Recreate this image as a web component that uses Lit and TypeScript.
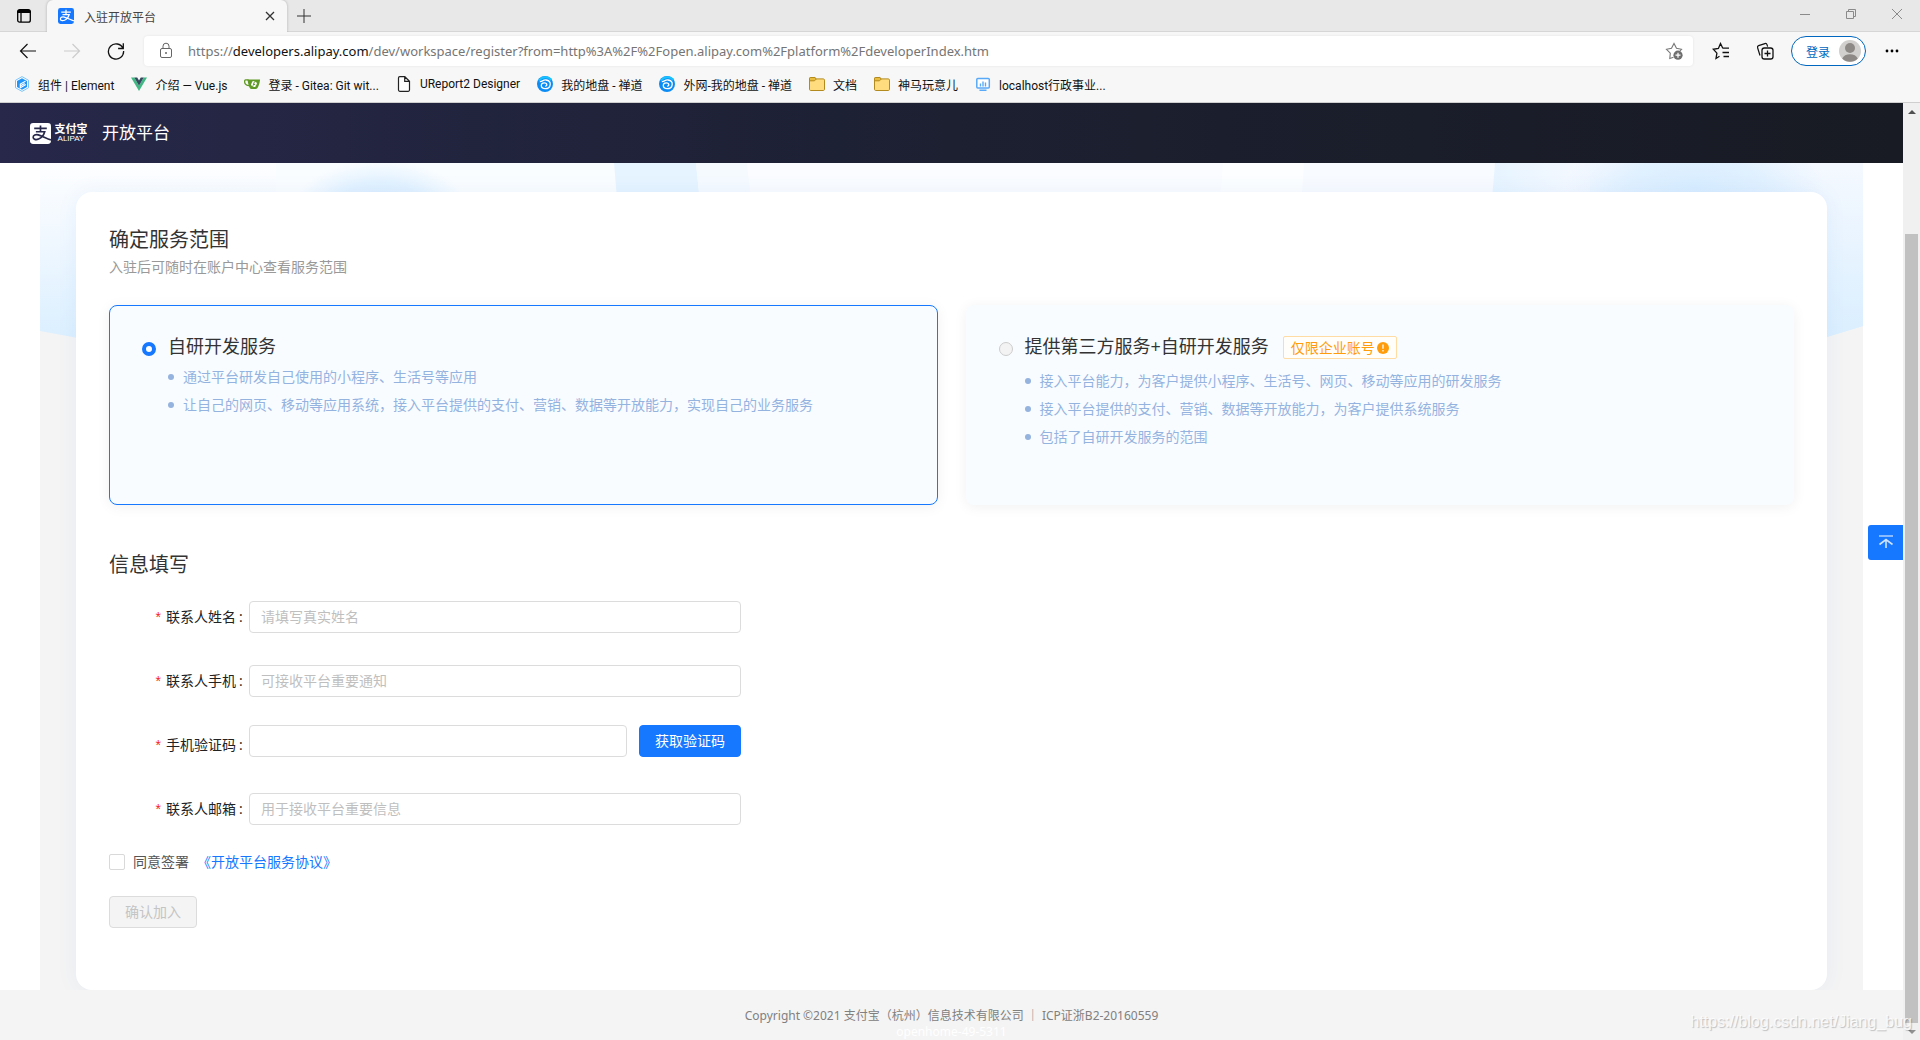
import { LitElement, html, svg, css, nothing } from "lit";
import { customElement, state } from "lit/decorators.js";

const zhiMark = svg`
  <path d="M4 5.200h12M10 2.300v6M5.600 8.300h8.400c-.9 3.200-3.200 5.900-5.800 7-2.700 1.100-5.200.3-5.200-1.700s2.300-3 4.900-2.300c3.600 1 7 3 12.100 4.900" fill="none" stroke-width="1.600"/>`;

const elementIcon = html`<svg width="16" height="16" viewBox="0 0 16 16" aria-hidden="true">
  <path d="M8 .6l6.500 3.700v7.400L8 15.400l-6.500-3.700V4.300z" fill="#fff" stroke="#6bbcff" stroke-width=".9"/>
  <path d="M8 2.300l5 2.800v5.800L8 13.700l-5-2.800V5.100z" fill="#2196f8"/>
  <path d="M11.500 5.300L6.300 8.100v3.600l5.600-3.100M6.500 9.700l4.200-2.300" stroke="#fff" stroke-width="1.100" fill="none"/>
</svg>`;
const vueIcon = html`<svg width="16" height="16" viewBox="0 0 16 16" aria-hidden="true">
  <path d="M0 1.500h3.300L8 9.700l4.700-8.200H16L8 15z" fill="#41b883"/>
  <path d="M3.300 1.500h2.900L8 4.600l1.800-3.100h2.900L8 9.700z" fill="#35495e"/>
</svg>`;
const giteaIcon = html`<svg width="16" height="16" viewBox="0 0 16 16" aria-hidden="true">
  <path d="M4.500 4C2 3.600.6 3.700.6 5.400c0 2.200 1.600 4 4.600 4.200" fill="none" stroke="#609926" stroke-width="1.300"/>
  <path d="M3.600 3.400l12 .1c.5 0 .5.5.3 1.200-.4 2.600-1 5-2.600 7.500-.4.600-1 .8-1.700.8H7.400c-.7 0-1.300-.4-1.600-1C4.600 9.500 3.800 6.500 3.600 3.400z" fill="#609926"/>
  <rect x="7.500" y="5.600" width="5" height="5" rx="1.200" transform="rotate(25 10 8)" fill="#fff"/>
  <path d="M10.400 5.800L9 9.800M9.800 7.800l1.400 1.300" stroke="#609926" fill="none"/>
</svg>`;
const fileIcon = html`<svg width="16" height="16" viewBox="0 0 16 16" aria-hidden="true">
  <path d="M2.500 2c0-.7.500-1.300 1.300-1.300h5l4.700 4.600v8.800c0 .7-.5 1.200-1.200 1.200H3.800c-.8 0-1.300-.5-1.300-1.200zM8.700.8v4.500h4.700" fill="#fff" stroke="#222" stroke-width="1.200"/>
</svg>`;
const zentaoIcon = html`<svg width="16" height="16" viewBox="0 0 16 16" aria-hidden="true">
  <circle cx="8" cy="8" r="8" fill="#0b8cf5"/>
  <path d="M2 4.500A8 8 0 0 1 14.500 4" fill="none" stroke="#18c3ff" stroke-width="2"/>
  <path d="M2.800 5.600C5 6 6 3.600 9 4c2.600.3 4.500 2 4.200 4.600-.3 2.600-2.400 4.100-5 4.100-2.200 0-3.900-1.300-3.900-3.100 0-1.600 1.200-2.800 2.900-2.800 1.500 0 2.600.9 2.600 2 0 .9-.7 1.500-1.700 1.400" fill="none" stroke="#fff" stroke-width="1.300"/>
</svg>`;
const folderIcon = html`<svg width="16" height="16" viewBox="0 0 16 16" aria-hidden="true">
  <path d="M.5 2.600c0-.7.5-1.100 1.100-1.100h4.200l1.500 1.400h7c.7 0 1.200.5 1.200 1.200v9.200c0 .7-.5 1.200-1.200 1.200H1.700c-.7 0-1.200-.5-1.200-1.200z" fill="#ffdc7d" stroke="#b38a1d"/>
  <path d="M.5 4.800h5L7.300 3 5.800 1.500H1.600C1 1.500.5 2 .5 2.600z" fill="#e8bd3f" stroke="#b38a1d"/>
</svg>`;
const monitorIcon = html`<svg width="16" height="16" viewBox="0 0 16 16" aria-hidden="true">
  <rect x="1.800" y="2.500" width="12.500" height="9.500" rx="1" fill="#fff" stroke="#58a9f7" stroke-width="1.500"/>
  <path d="M5.500 7.500v3M8 5.500v5M10.500 6.500v4M4.500 14.200h7" stroke="#58a9f7" stroke-width="1.400" fill="none"/>
</svg>`;

const bookmarks = [
  { icon: elementIcon, text: "组件 | Element" },
  { icon: vueIcon, text: "介绍 — Vue.js" },
  { icon: giteaIcon, text: "登录 - Gitea: Git wit..." },
  { icon: fileIcon, text: "UReport2 Designer" },
  { icon: zentaoIcon, text: "我的地盘 - 禅道" },
  { icon: zentaoIcon, text: "外网-我的地盘 - 禅道" },
  { icon: folderIcon, text: "文档" },
  { icon: folderIcon, text: "神马玩意儿" },
  { icon: monitorIcon, text: "localhost行政事业..." },
];

@customElement("browser-chrome")
export class BrowserChrome extends LitElement {
  static styles = css`
    :host { display: block; background: #f7f7f7; border-bottom: 1px solid #cfcfcf; font-family: Roboto, "Noto Sans CJK SC", sans-serif; font-size: 12px; color: #111; }
    button { border: 0; padding: 0; background: none; font: inherit; color: inherit; display: grid; place-items: center; }
    svg { display: block; flex: none; }
    .tabs { display: flex; align-items: stretch; height: 32px; background: #e8e8e8; box-shadow: inset 0 -1px #d6d6d6; }
    .panes { width: 47px; }
    .tab { display: flex; align-items: center; width: 240px; box-sizing: border-box; padding: 0 11px; gap: 10px; background: #f7f7f7; border-radius: 6px 6px 0 0; box-shadow: 0 0 3px rgba(0, 0, 0, 0.25); clip-path: inset(0 -4px 0 -4px); }
    .tab-title { flex: 1; color: #444; }
    .add { width: 34px; }
    .window { display: flex; margin-left: auto; color: #8a8a8a; }
    .window button { width: 46px; height: 28px; }
    .bar { display: flex; align-items: center; height: 38px; }
    .nav { display: flex; width: 144px; box-sizing: border-box; padding: 0 6px; }
    .nav button { width: 44px; }
    .address { flex: 1; display: flex; align-items: center; height: 30px; box-sizing: border-box; background: #fff; border-radius: 4px; padding: 0 10px 0 14px; gap: 14px; box-shadow: 0 0 3px rgba(0, 0, 0, 0.08); }
    .url { flex: 1; font-family: "Noto Sans", sans-serif; font-size: 13px; color: #757575; white-space: nowrap; }
    .url b { font-weight: 400; color: #111; }
    .tools { display: flex; align-items: center; }
    .tools .tool { width: 32px; }
    .tools .tool:first-child { width: 56px; }
    .login { display: flex; align-items: center; width: 75px; height: 30px; box-sizing: border-box; justify-content: space-between; border: 1px solid #0067c0; border-radius: 15px; background: #fff; padding: 0 3px 0 14px; color: #0067c0; margin: 0 8px 0 10px; }
    .tools .more { width: 36px; margin-right: 10px; }
    .marks { display: flex; align-items: center; height: 28px; padding: 0 14px 4px; gap: 17px; list-style: none; margin: 0; }
    .marks a { display: flex; align-items: center; gap: 8px; color: inherit; text-decoration: none; white-space: nowrap; }
  `;

  render() {
    return html`
      <div class="tabs">
        <button class="panes" aria-label="标签页操作">
          <svg width="16" height="16" viewBox="0 0 16 16"><path d="M1.700 4h12.600v8.200c0 1.200-.8 2-2 2H3.700c-1.200 0-2-.8-2-2zM5 4v10" fill="none" stroke="#000" stroke-width="1.300"/><path d="M1 5V3.700C1 2 2.200 1 3.700 1h8.600C13.800 1 15 2 15 3.700V5z"/></svg>
        </button>
        <div class="tab">
          <svg width="16" height="16" viewBox="0 0 20 20" aria-hidden="true"><rect width="20" height="20" rx="3" fill="#1677ff"/><g stroke="#fff">${zhiMark}</g></svg>
          <span class="tab-title">入驻开放平台</span>
          <button aria-label="关闭标签页"><svg width="12" height="12" viewBox="0 0 12 12"><path d="M2 2l8 8M10 2l-8 8" stroke="#333" stroke-width="1.300"/></svg></button>
        </div>
        <button class="add" aria-label="新建标签页"><svg width="16" height="16" viewBox="0 0 16 16"><path d="M1 8h14M8 1v14" stroke="#333"/></svg></button>
        <div class="window">
          <button aria-label="最小化"><svg width="12" height="12" viewBox="0 0 12 12"><path d="M1 6.500h10" stroke="currentColor"/></svg></button>
          <button aria-label="还原"><svg width="12" height="12" viewBox="0 0 12 12"><path d="M1.500 3.500h7v7h-7zM3.500 3.500v-2h7v7h-2" fill="none" stroke="currentColor"/></svg></button>
          <button aria-label="关闭"><svg width="12" height="12" viewBox="0 0 12 12"><path d="M1 1l10 10M11 1L1 11" stroke="currentColor"/></svg></button>
        </div>
      </div>
      <div class="bar">
        <div class="nav">
          <button aria-label="后退"><svg width="18" height="18" viewBox="0 0 18 18"><path d="M17 9H1.500M8.500 2l-7 7 7 7" fill="none" stroke="#111" stroke-width="1.200"/></svg></button>
          <button aria-label="前进" disabled><svg width="18" height="18" viewBox="0 0 18 18"><path d="M1 9h15.500M9.500 2l7 7-7 7" fill="none" stroke="#ccc" stroke-width="1.200"/></svg></button>
          <button aria-label="刷新"><svg width="18" height="18" viewBox="0 0 18 18"><path d="M16 6.500A7.600 7.600 0 1 0 16.600 9M16.300 1.300v5.200h-5.200" fill="none" stroke="#111" stroke-width="1.300"/></svg></button>
        </div>
        <div class="address">
          <svg width="16" height="18" viewBox="0 0 16 18" aria-hidden="true"><rect x="2.500" y="6.500" width="11" height="9" rx="1.500" fill="none" stroke="#666"/><path d="M5 6.500V4.200a3 3 0 0 1 6 0v2.300" fill="none" stroke="#666"/><circle cx="8" cy="11" r="1" fill="#666"/></svg>
          <span class="url">https://<b>developers.alipay.com</b>/dev/workspace/register?from=http%3A%2F%2Fopen.alipay.com%2Fplatform%2FdeveloperIndex.htm</span>
          <button aria-label="添加到收藏夹"><svg width="18" height="18" viewBox="0 0 18 18"><path d="M8.500 15.200l-3.700 1.300.5-5.300L1.500 7.300l5-1L9 1.500l2.500 4.800 5 1-1.500 1.500" fill="none" stroke="#777" stroke-width="1.100"/><circle cx="13" cy="13.200" r="4.600" fill="#6e6e6e"/><path d="M10.500 13.200h5M13 10.700v5" stroke="#fff" stroke-width="1.200"/></svg></button>
        </div>
        <div class="tools">
          <button class="tool" aria-label="收藏夹"><svg width="18" height="18" viewBox="0 0 18 18"><path d="M7.500 14.300L4 16.500l.9-5.400L1.300 7.300l5.100-.8L8.500 1.500l2.300 4.700M10.800 6.200h6.200M10.500 10.500H17M11.500 14.500H17" fill="none" stroke="#111" stroke-width="1.300"/></svg></button>
          <button class="tool" aria-label="集锦"><svg width="18" height="18" viewBox="0 0 18 18"><path d="M4 13.500L1.600 5.700c-.3-1 .1-1.800 1-2.100l6.300-2c1-.3 1.800.1 2.100 1l.6 2" fill="none" stroke="#111" stroke-width="1.200"/><rect x="6" y="6" width="11" height="11" rx="2.300" fill="none" stroke="#111" stroke-width="1.300"/><path d="M8.500 11.500h6M11.500 8.500v6" stroke="#111" stroke-width="1.300"/></svg></button>
          <button class="login">登录<svg width="24" height="24" viewBox="0 0 24 24" aria-hidden="true"><circle cx="12" cy="12" r="11" fill="#d2d0ce"/><circle cx="12" cy="9" r="5" fill="#8d8986"/><path d="M4.200 19.500c1.300-2.800 4.200-4.300 7.800-4.300s6.500 1.500 7.800 4.300a11 11 0 0 1-15.600 0z" fill="#8d8986"/></svg></button>
          <button class="more" aria-label="设置及其他"><svg width="16" height="4" viewBox="0 0 16 4"><circle cx="3" cy="2" r="1.400"/><circle cx="8" cy="2" r="1.400"/><circle cx="13" cy="2" r="1.400"/></svg></button>
        </div>
      </div>
      <ul class="marks">
        ${bookmarks.map((b) => html`<li><a href="#">${b.icon}<span>${b.text}</span></a></li>`)}
      </ul>`;
  }
}

const services = [
  {
    id: "self",
    title: "自研开发服务",
    tag: "",
    points: [
      "通过平台研发自己使用的小程序、生活号等应用",
      "让自己的网页、移动等应用系统，接入平台提供的支付、营销、数据等开放能力，实现自己的业务服务",
    ],
  },
  {
    id: "third",
    title: "提供第三方服务+自研开发服务",
    tag: "仅限企业账号",
    points: [
      "接入平台能力，为客户提供小程序、生活号、网页、移动等应用的研发服务",
      "接入平台提供的支付、营销、数据等开放能力，为客户提供系统服务",
      "包括了自研开发服务的范围",
    ],
  },
];

const fields = [
  { id: "name", label: "联系人姓名", hint: "请填写真实姓名", code: false },
  { id: "mobile", label: "联系人手机", hint: "可接收平台重要通知", code: false },
  { id: "code", label: "手机验证码", hint: "", code: true },
  { id: "mail", label: "联系人邮箱", hint: "用于接收平台重要信息", code: false },
];

@customElement("register-form")
export class RegisterForm extends LitElement {
  @state() private agreed = false;

  static styles = css`
    :host { display: block; font-size: 14px; line-height: 22px; color: #333; }
    h2 { margin: 0; font-size: 20px; line-height: 28px; font-weight: 400; }
    .sub { margin: 2px 0 0; color: #999; }
    .services { display: grid; grid-template-columns: 1fr 1fr; gap: 28px; margin-top: 27px; }
    .service { min-height: 200px; box-sizing: border-box; border: 1px solid transparent; border-radius: 8px; background: #f8fcff; padding: 27px 32px; box-shadow: 0 2px 14px rgba(0, 0, 0, 0.06); }
    .service.on { border-color: #1677ff; }
    .head { display: grid; grid-template-columns: 14px auto auto 1fr; align-items: start; column-gap: 12px; }
    .head.tagged { min-height: 30px; }
    .head label { font-size: 18px; line-height: 26px; }
    .radio { appearance: none; width: 14px; height: 14px; margin: 9px 0 0; border: 1px solid #ccc; border-radius: 50%; background: #f3f3f3; box-sizing: border-box; }
    .radio:checked { border: 4px solid #1677ff; background: #fff; }
    .tag { display: flex; align-items: center; gap: 2px; height: 23px; box-sizing: border-box; margin: 3px 0 0 2px; padding: 0 7px; border: 1px solid #ffdca3; border-radius: 2px; background: #fffefa; color: #ff9c0c; }
    .points { list-style: none; margin: 4px 0 0; padding: 0 0 0 26px; color: #95b3df; line-height: 28px; }
    .points li { display: flex; align-items: center; gap: 9px; }
    .points li::before { content: ""; width: 6px; height: 6px; flex: none; border-radius: 50%; background: #95b3df; }
    .info { margin-top: 46px; }
    .rows { margin-top: 6px; max-width: 632px; }
    .row { display: grid; grid-template-columns: 130px 1fr; column-gap: 10px; align-items: center; height: 64px; }
    .name { display: flex; justify-content: flex-end; color: #222; white-space: nowrap; }
    .name::before { content: "*"; margin-right: 5px; color: #f5222d; font-family: "Liberation Sans", sans-serif; }
    .name::after { content: ":"; width: 0; margin-left: 3px; }
    .control { display: flex; gap: 12px; }
    .control.code { padding-bottom: 8px; }
    .text { flex: 1; min-width: 0; height: 32px; box-sizing: border-box; border: 1px solid #dcdcdc; border-radius: 4px; background: #fff; padding: 0 11px 2px; font: inherit; color: inherit; }
    .text::placeholder { color: #bfbfbf; opacity: 1; }
    .button { height: 32px; border: 1px solid #1677ff; border-radius: 4px; background: #1677ff; color: #fff; padding: 0 15px; font: inherit; }
    .button:disabled { background: #f4f4f4; border-color: #dcdcdc; color: #c4c4c4; }
    .agree { display: flex; align-items: center; gap: 8px; margin: 10px 0 23px; color: #555; }
    .agree input { appearance: none; width: 16px; height: 16px; box-sizing: border-box; margin: 0; border: 1px solid #d9d9d9; border-radius: 2px; background: #fff; }
    .agree input:checked { background: #1677ff; }
    .agree a { color: #1677ff; text-decoration: none; }
  `;

  render() {
    return html`
      <h2>确定服务范围</h2>
      <p class="sub">入驻后可随时在账户中心查看服务范围</p>
      <div class="services">
        ${services.map(
          (s, i) => html`<section class="service ${i === 0 ? "on" : ""}">
            <div class="head ${s.tag ? "tagged" : ""}">
              <input class="radio" type="radio" name="service" id=${s.id} ?checked=${i === 0} ?disabled=${i > 0} />
              <label for=${s.id}>${s.title}</label>
              ${s.tag
                ? html`<span class="tag">${s.tag}<svg width="12" height="12" viewBox="0 0 12 12" aria-hidden="true"><circle cx="6" cy="6" r="6" fill="#ff9c0c"/><path d="M6 2.500v4.300M6 8v1.500" stroke="#fff" stroke-width="1.300"/></svg></span>`
                : nothing}
            </div>
            <ul class="points">${s.points.map((p) => html`<li>${p}</li>`)}</ul>
          </section>`
        )}
      </div>
      <h2 class="info">信息填写</h2>
      <form @submit=${(e: Event) => e.preventDefault()}>
        <div class="rows">
          ${fields.map(
            (f) => html`<div class="row">
              <label class="name" for=${f.id}>${f.label}</label>
              <div class="control ${f.code ? "code" : ""}">
                <input class="text" id=${f.id} type="text" placeholder=${f.hint || nothing} />
                ${f.code ? html`<button class="button" type="button">获取验证码</button>` : nothing}
              </div>
            </div>`
          )}
        </div>
        <div class="agree">
          <input id="agree" type="checkbox" .checked=${this.agreed} @change=${() => (this.agreed = !this.agreed)} />
          <label for="agree">同意签署</label>
          <a href="#">《开放平台服务协议》</a>
        </div>
        <button class="button" type="submit" ?disabled=${!this.agreed}>确认加入</button>
      </form>`;
  }
}

@customElement("app-root")
export class AppRoot extends LitElement {
  static styles = css`
    :host { display: flex; flex-direction: column; min-height: 100vh; position: relative; background: #fff; font-family: "Open Sans", "Noto Sans CJK SC", sans-serif; }
    browser-chrome { height: 102px; }
    .view { flex: 1; display: flex; position: relative; }
    .page { flex: 1; min-width: 0; display: flex; flex-direction: column; position: relative; }
    .top { display: flex; align-items: center; height: 60px; padding: 0 30px; background: linear-gradient(90deg, #27284a, #1c2031 50%, #181b23); color: #fff; }
    .top svg { display: block; }
    .brand { display: flex; flex-direction: column; align-items: center; width: 36px; margin-left: 2px; font-size: 11px; line-height: 12px; font-weight: 700; }
    .latin { font-family: "Liberation Sans", sans-serif; font-size: 8px; line-height: 8px; font-weight: 400; }
    .product { margin-left: 13px; font-size: 17px; line-height: 24px; }
    .main { flex: 1; display: flex; margin: 0 40px; padding: 29px 36px 0; background: #f4f4f4; position: relative; overflow: hidden; }
    .art { position: absolute; inset: 0 0 auto 0; width: 100%; height: 176px; }
    .card { flex: 1; position: relative; background: #fff; border-radius: 16px; padding: 34px 33px 56px; box-shadow: 0 0 20px rgba(60, 130, 220, 0.08); }
    .foot { background: #f4f4f4; height: 50px; box-sizing: border-box; padding-top: 18px; text-align: center; font-family: "Noto Sans", "Noto Sans CJK SC", sans-serif; font-size: 12px; line-height: 16px; color: #808080; }
    .foot p { margin: 0; }
    .build { color: #fff; }
    .up { position: absolute; right: 0; top: 45%; width: 35px; height: 35px; border: 0; padding: 0; border-radius: 3px 0 0 3px; background: #1677ff; display: grid; place-items: center; }
    .scroll { width: 17px; box-sizing: border-box; background: #f0f0f0; display: flex; flex-direction: column; padding: 0 2px; }
    .arrow { height: 17px; display: grid; place-items: center; }
    .space { flex: 10; }
    .thumb { flex: 69; background: #c1c1c1; }
    .mark { position: absolute; right: 8px; bottom: 8px; font-family: "Liberation Sans", sans-serif; font-size: 16px; line-height: 20px; color: rgba(255, 255, 255, 0.8); text-shadow: 1px 1px 1px rgba(0, 0, 0, 0.22); }
  `;

  render() {
    return html`
      <browser-chrome></browser-chrome>
      <div class="view">
        <div class="page">
          <header class="top">
            <svg width="21" height="21" viewBox="0 0 20 20" aria-hidden="true"><rect width="20" height="20" rx="3" fill="#fff"/><g stroke="#27284a">${zhiMark}</g></svg>
            <div class="brand"><span>支付宝</span><span class="latin">ALIPAY</span></div>
            <span class="product">开放平台</span>
          </header>
          <main class="main">
            <svg class="art" viewBox="0 0 1823 176" preserveAspectRatio="none" aria-hidden="true">
              <defs>
                <linearGradient id="base" x1="0" y1="0" x2="0" y2="1"><stop offset="0" stop-color="#fdfeff"/><stop offset=".4" stop-color="#f1f8ff"/><stop offset="1" stop-color="#daefff"/></linearGradient>
                <linearGradient id="edge" x1="0" y1="0" x2="0" y2="1"><stop offset="0" stop-color="#f5f9ff"/><stop offset="1" stop-color="#d9eeff"/></linearGradient>
                <radialGradient id="glow"><stop offset="0" stop-color="#d8edff"/><stop offset=".5" stop-color="#d8edff" stop-opacity=".7"/><stop offset="1" stop-color="#d8edff" stop-opacity="0"/></radialGradient>
                <linearGradient id="pane" x1="0" y1="0" x2="1" y2="0"><stop offset="0" stop-color="#e6f4ff"/><stop offset="1" stop-color="#f6f9ff"/></linearGradient>
              </defs>
              <path d="M0 0H1823V163L1770 179H60L0 168z" fill="url(#base)"/>
              <path d="M236 0H574L580 60H236z" fill="#fafdff"/>
              <ellipse cx="340" cy="42" rx="85" ry="45" fill="url(#glow)"/>
              <path d="M574 0H656L662 60H579z" fill="#e6f4ff"/>
              <path d="M656 0H707L714 60H662z" fill="#f5faff"/>
              <path d="M707 0H1183L1178 60H714z" fill="#fafcff"/>
              <path d="M1183 0H1264L1260 60H1178z" fill="#fcfeff"/>
              <path d="M1264 0H1455L1450 60H1260z" fill="#f8fbff"/>
              <path d="M1455 0H1823V163L1770 179H1450z" fill="url(#edge)"/>
              <path d="M1455 0H1550V60H1450z" fill="url(#pane)"/>
              <ellipse cx="1655" cy="25" rx="130" ry="60" fill="url(#glow)"/>
            </svg>
            <register-form class="card"></register-form>
          </main>
          <footer class="foot">
            <p>Copyright ©2021 支付宝（杭州）信息技术有限公司 ｜ ICP证浙B2-20160559</p>
            <p class="build">openhome-49-5311</p>
          </footer>
          <button class="up" aria-label="回到顶部"><svg width="16" height="16" viewBox="0 0 16 16"><path d="M1 2h14" stroke="#fff"/><path d="M1.500 10.500L8 5.500l6.500 5M8 6v8" fill="none" stroke="#cfe3ff" stroke-width="1.600"/></svg></button>
        </div>
        <div class="scroll" aria-hidden="true">
          <div class="arrow"><svg width="8" height="4" viewBox="0 0 8 4"><path d="M0 4l4-4 4 4z" fill="#505050"/></svg></div>
          <div class="space"></div>
          <div class="thumb"></div>
          <div class="arrow"><svg width="8" height="4" viewBox="0 0 8 4"><path d="M0 0l4 4 4-4z" fill="#909090"/></svg></div>
        </div>
      </div>
      <span class="mark">https://blog.csdn.net/Jiang_bug</span>`;
  }
}
